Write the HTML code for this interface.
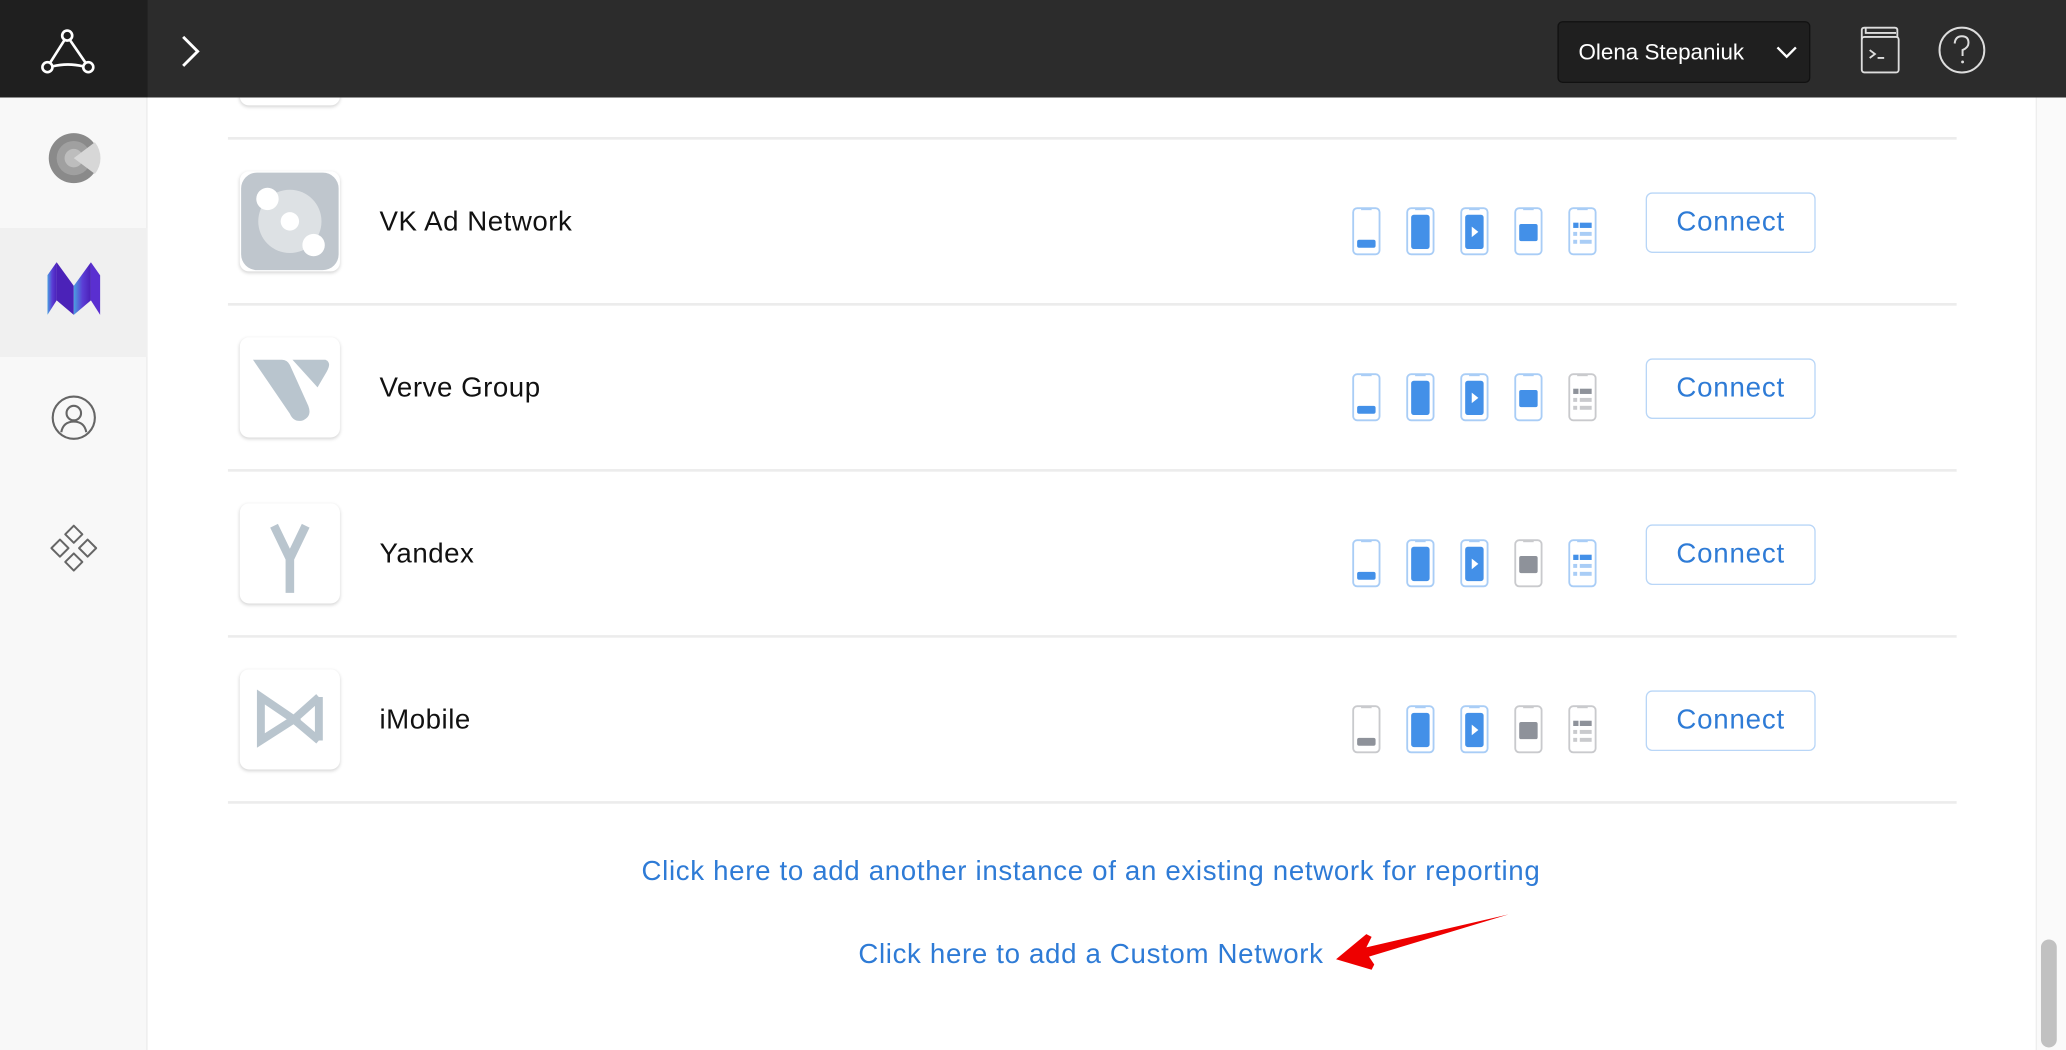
<!DOCTYPE html>
<html><head><meta charset="utf-8"><style>
*{margin:0;padding:0;box-sizing:border-box}
html,body{width:2066px;height:1050px;overflow:hidden;background:#fff}
#s{width:1568px;height:797px;transform:scale(1.317602);transform-origin:0 0;position:relative;font-family:"Liberation Sans",sans-serif}
.top{position:absolute;left:0;top:0;width:1568px;height:74px;background:#2c2c2c}
.logo{position:absolute;left:0;top:0;width:112px;height:74px;background:#1f1f1f}
.side{position:absolute;left:0;top:74px;width:112px;height:723px;background:#f8f8f8;border-right:1px solid #ececec}
.act{position:absolute;left:0;top:99px;width:112px;height:98px;background:#f0f0f0}
.line{position:absolute;left:173px;width:1312px;height:2px;background:#ececec}
.lg{position:absolute;left:182px;width:76px;height:76px;border-radius:7px;background:#fff;box-shadow:0 1px 3px rgba(0,0,0,.18)}
.nm{position:absolute;left:288px;font-size:21px;letter-spacing:.4px;color:#111;line-height:24px}
.ic{position:absolute;width:22px;height:37px}
.b{--f:#4390e8;--o:#a9cdf6;--l:#a9cdf6}
.g{--f:#8e929a;--o:#c9cacd;--l:#c9cacd}
.btn{position:absolute;left:1249px;width:129px;height:46px;border:1.5px solid #b9d6f7;border-radius:5px;color:#2e7bd6;font-size:21px;letter-spacing:.6px;text-align:center;line-height:43px}
.lnk{position:absolute;left:0;width:1656px;text-align:center;color:#2e7bd6;font-size:21px;letter-spacing:.5px}
</style></head><body><div id="s">
<svg width="0" height="0" style="position:absolute">
<defs>
<symbol id="ph" viewBox="0 0 22 37"><rect x="1" y="1" width="20" height="35" rx="3" fill="#fff" stroke="var(--o)" stroke-width="1.4"/><rect x="7" y="1" width="8" height="1.5" fill="var(--o)"/></symbol>
<symbol id="t1" viewBox="0 0 22 37"><use href="#ph"/><rect x="4" y="25" width="14" height="6" rx="1.5" fill="var(--f)"/></symbol>
<symbol id="t2" viewBox="0 0 22 37"><use href="#ph"/><rect x="4" y="6" width="14" height="26" rx="2" fill="var(--f)"/></symbol>
<symbol id="t3" viewBox="0 0 22 37"><use href="#ph"/><rect x="4" y="6" width="14" height="26" rx="2" fill="var(--f)"/><path d="M9 15 L14 19 L9 23Z" fill="#fff"/></symbol>
<symbol id="t4" viewBox="0 0 22 37"><use href="#ph"/><rect x="4" y="13" width="14" height="13" rx="1.5" fill="var(--f)"/></symbol>
<symbol id="t5" viewBox="0 0 22 37"><use href="#ph"/><rect x="4" y="12" width="4" height="4" fill="var(--f)"/><rect x="9" y="12" width="9" height="4" fill="var(--f)"/><rect x="4" y="19" width="3" height="3" fill="var(--l)"/><rect x="9" y="19" width="9" height="3" fill="var(--l)"/><rect x="4" y="25" width="3" height="3" fill="var(--l)"/><rect x="9" y="25" width="9" height="3" fill="var(--l)"/></symbol>
</defs></svg>

<div class="lg" style="top:4px"></div>
<div class="top"></div>
<div class="logo"><svg width="112" height="74"><g fill="none" stroke="#fff" stroke-width="2"><circle cx="51" cy="27" r="3.8"/><circle cx="36" cy="51" r="3.8"/><circle cx="67" cy="51" r="3.8"/><path d="M49 30.3 L38 47.7 M53 30.3 L65 47.7 M39.8 50.4 Q51.5 47.5 63.2 50.4"/></g></svg></div>
<svg style="position:absolute;left:130px;top:24px" width="30" height="30"><path d="M9 4 L20 15 L9 26" fill="none" stroke="#fff" stroke-width="2.2"/></svg>
<div style="position:absolute;left:1182px;top:16px;width:192px;height:47px;background:#1f1f1f;border:1px solid #111;border-radius:4px;color:#fff;font-size:17px;line-height:45px;padding-left:15px">Olena Stepaniuk</div>
<svg style="position:absolute;left:1346px;top:31px" width="20" height="16"><path d="M3 5 L10 12 L17 5" fill="none" stroke="#fff" stroke-width="1.8"/></svg>
<svg style="position:absolute;left:1410px;top:18px" width="34" height="40"><g fill="none" stroke="#ddd" stroke-width="1.4"><rect x="3" y="10" width="28" height="27" rx="2"/><path d="M3 12 V5 Q3 3 5 3 H28 Q30 3 30 5 V10 M6 3 V7 H29"/><path d="M9 20 L13 23 L9 26 M15 26 H20"/></g></svg>
<svg style="position:absolute;left:1468px;top:17px" width="42" height="42"><circle cx="21" cy="21" r="17" fill="none" stroke="#ddd" stroke-width="1.5"/><path d="M15.5 16 Q16 10.5 21 10.5 Q26 10.5 26 15.5 Q26 19 21.5 21 V25.5" fill="none" stroke="#ddd" stroke-width="1.5"/><circle cx="21.5" cy="30" r="1.1" fill="#ddd"/></svg>

<div class="side"><div class="act"></div></div>
<svg style="position:absolute;left:36px;top:98px" width="42" height="44"><circle cx="20" cy="22" r="19" fill="#8a8a8a"/><circle cx="20" cy="22" r="13" fill="#a0a0a0"/><circle cx="20" cy="22" r="7" fill="#bdbdbd"/><path d="M20 22 L36 10 A19 19 0 0 1 36 34Z" fill="#d7d7d7"/></svg>
<svg style="position:absolute;left:36px;top:199px" width="42" height="42"><defs><linearGradient id="mg" x1="0" x2="1"><stop offset="0" stop-color="#4aa0e0"/><stop offset=".5" stop-color="#5b3ed6"/><stop offset="1" stop-color="#4a1fb8"/></linearGradient></defs><path d="M0 10 L7 29 L7 0Z" fill="#6b6fe0"/><path d="M7 0 L20 18 L20 40 L7 29Z" fill="#4b22b8"/><path d="M0 10 L7 0 L7 29 L0 40Z" fill="url(#mg)"/><path d="M20 18 L33 0 L33 29 L20 40Z" fill="url(#mg)"/><path d="M33 0 L40 10 L40 40 L33 29Z" fill="#5a2fd0"/></svg>
<svg style="position:absolute;left:38px;top:299px" width="36" height="36"><g fill="none" stroke="#666" stroke-width="1.6"><circle cx="18" cy="18" r="16"/><circle cx="18" cy="14.5" r="5.5"/><path d="M8.5 29 Q10 21 18 21 Q26 21 27.5 29"/></g></svg>
<svg style="position:absolute;left:36px;top:396px" width="42" height="42"><g fill="none" stroke="#666" stroke-width="1.5" stroke-linejoin="round"><path d="M20 3 L26.5 9.5 L20 16 L13.5 9.5Z M20 24 L26.5 30.5 L20 37 L13.5 30.5Z M9.5 13.5 L16 20 L9.5 26.5 L3 20Z M30.5 13.5 L37 20 L30.5 26.5 L24 20Z"/></g></svg>

<div class="line" style="top:104px"></div>
<div class="line" style="top:230px"></div>
<div class="line" style="top:356px"></div>
<div class="line" style="top:482px"></div>
<div class="line" style="top:608px"></div>

<div class="lg" style="top:130px;overflow:hidden"><svg width="76" height="76"><rect x="1" y="1" width="74" height="74" rx="12" fill="#bfc6cd"/><circle cx="38" cy="38" r="24" fill="#dde1e4"/><circle cx="38" cy="38" r="7" fill="#fff"/><circle cx="21" cy="21" r="8.5" fill="#fff"/><circle cx="56" cy="56" r="8.5" fill="#fff"/></svg></div>
<div class="lg" style="top:256px"><svg width="76" height="76"><path d="M10 17 H32 Q36 17 38 21 L52 52 Q55 60 48 63 Q41 65 38 58Z" fill="#b9c5ce"/><path d="M40 17 H65 Q70 19 66 26 L59 38Z" fill="#b9c5ce"/></svg></div>
<div class="lg" style="top:382px"><svg width="76" height="76"><path d="M26 17 L38 42 L50 17 M38 42 V68" fill="none" stroke="#b9c5ce" stroke-width="6.5"/></svg></div>
<div class="lg" style="top:508px"><svg width="76" height="76"><g fill="none" stroke="#b9c5ce" stroke-width="6"><path d="M16 21 V54 L41 38Z"/><path d="M60 21 V54 M60 21 L41 38 L60 54"/></g></svg></div>

<div class="nm" style="top:157px">VK Ad Network</div>
<div class="nm" style="top:283px">Verve Group</div>
<div class="nm" style="top:409px">Yandex</div>
<div class="nm" style="top:535px">iMobile</div>

<svg class="ic b" style="left:1026px;top:157px"><use href="#t1"/></svg><svg class="ic b" style="left:1067px;top:157px"><use href="#t2"/></svg><svg class="ic b" style="left:1108px;top:157px"><use href="#t3"/></svg><svg class="ic b" style="left:1149px;top:157px"><use href="#t4"/></svg><svg class="ic b" style="left:1190px;top:157px"><use href="#t5"/></svg>
<svg class="ic b" style="left:1026px;top:283px"><use href="#t1"/></svg><svg class="ic b" style="left:1067px;top:283px"><use href="#t2"/></svg><svg class="ic b" style="left:1108px;top:283px"><use href="#t3"/></svg><svg class="ic b" style="left:1149px;top:283px"><use href="#t4"/></svg><svg class="ic g" style="left:1190px;top:283px"><use href="#t5"/></svg>
<svg class="ic b" style="left:1026px;top:409px"><use href="#t1"/></svg><svg class="ic b" style="left:1067px;top:409px"><use href="#t2"/></svg><svg class="ic b" style="left:1108px;top:409px"><use href="#t3"/></svg><svg class="ic g" style="left:1149px;top:409px"><use href="#t4"/></svg><svg class="ic b" style="left:1190px;top:409px"><use href="#t5"/></svg>
<svg class="ic g" style="left:1026px;top:535px"><use href="#t1"/></svg><svg class="ic b" style="left:1067px;top:535px"><use href="#t2"/></svg><svg class="ic b" style="left:1108px;top:535px"><use href="#t3"/></svg><svg class="ic g" style="left:1149px;top:535px"><use href="#t4"/></svg><svg class="ic g" style="left:1190px;top:535px"><use href="#t5"/></svg>

<div class="btn" style="top:146px">Connect</div>
<div class="btn" style="top:272px">Connect</div>
<div class="btn" style="top:398px">Connect</div>
<div class="btn" style="top:524px">Connect</div>

<div class="lnk" style="top:650px">Click here to add another instance of an existing network for reporting</div>
<div class="lnk" style="top:713px">Click here to add a Custom Network</div>
<svg style="position:absolute;left:1005px;top:688px" width="145" height="50"><path d="M140 6 L32 31 L36 23 L32 21 L9 40 L36 48 L38 44 L34 38 Z" fill="#ee0000"/></svg>

<div style="position:absolute;left:1545px;top:74px;width:23px;height:723px;background:#fafafa;border-left:1px solid #eee"></div>
<div style="position:absolute;left:1549px;top:713px;width:12px;height:82px;border-radius:6px;background:#c1c1c1"></div>
</div></body></html>
